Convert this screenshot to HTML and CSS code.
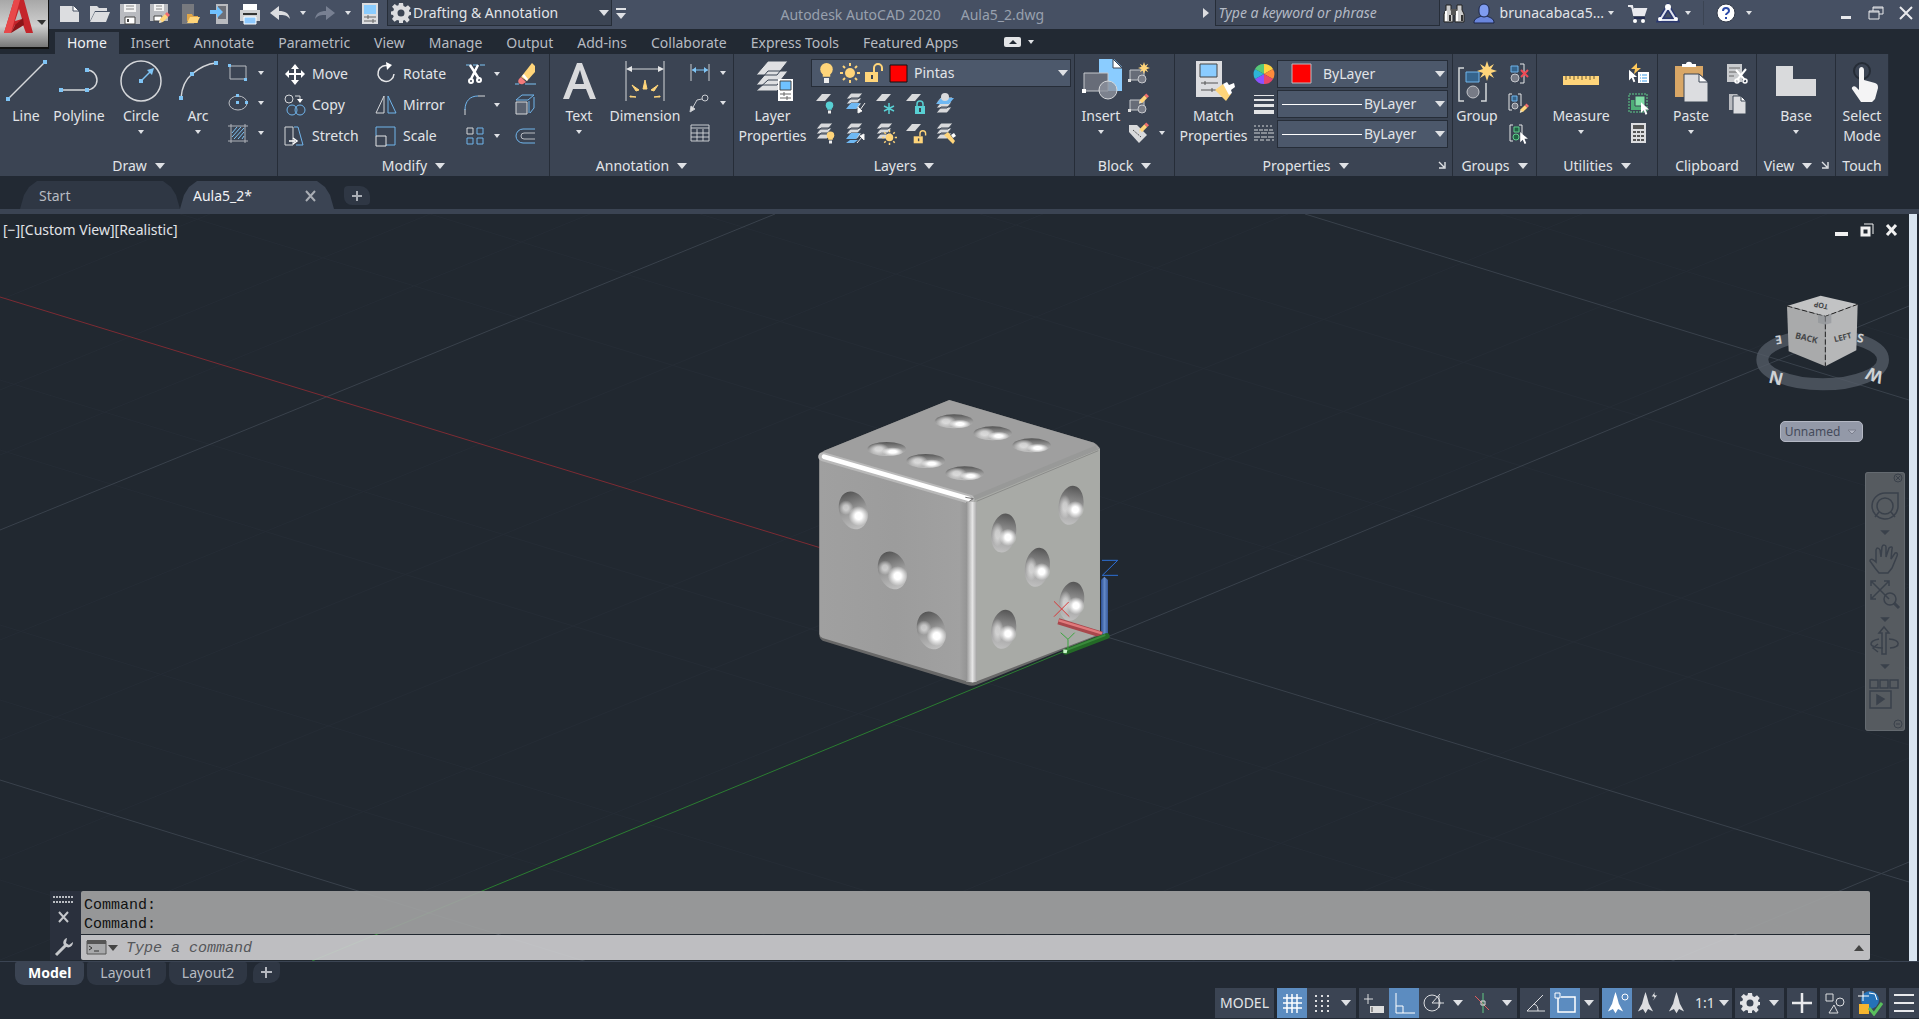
FILE: index.html
```html
<!DOCTYPE html>
<html lang="en">
<head>
<meta charset="utf-8">
<title>Autodesk AutoCAD 2020 - Aula5_2.dwg</title>
<link rel="stylesheet" href="styles.css">
</head>
<body>
<svg class="sprite" aria-hidden="true">
  <defs>
    <symbol id="stack" viewBox="0 0 24 24"><path d="M8 1h12l-5 6H3zM8 6h11l-5 6H3zM8 11h11l-5 6H3z" fill="#d9dadc" stroke="#3b4453"/></symbol>
    <symbol id="sheet" viewBox="0 0 24 24"><path d="M9 3h9l-6 7H3z" fill="#d9dadc"/></symbol>
    <symbol id="bulb" viewBox="0 0 12 16"><circle cx="6" cy="5" r="5"/><path d="M3 8h6v3H3z"/><path d="M4 12h4v4H4z" fill="#eee"/></symbol>
    <symbol id="sun" viewBox="0 0 20 20"><circle cx="10" cy="10" r="5"/><path d="M10 0v3M10 17v3M0 10h3M17 10h3M3 3l2 2M15 15l2 2M3 17l2-2M15 5l2-2" stroke="#ffd57a" stroke-width="2"/></symbol>
    <symbol id="unlock" viewBox="0 0 20 20"><path d="M1 9h13v10H1z"/><path d="M10 9V5a4 4 0 0 1 8 0v3" fill="none" stroke="#ffd57a" stroke-width="2"/><path d="M7 12h2v4H7z" fill="#3b4453"/></symbol>
    <symbol id="pencil" viewBox="0 0 12 12"><path d="M1 11l1-4 5-5 3 3-5 5z" fill="#ffd57a"/><path d="M7 2l2-2 3 3-2 2z" fill="#f26d6d"/><path d="M1 11l1-3 2 2z" fill="#ddd"/></symbol>
    <symbol id="cursor" viewBox="0 0 10 14"><path d="M0 0v12l3-3 2 5 2-1-2-5h4z" fill="#fff"/></symbol>
    <symbol id="star" viewBox="0 0 20 20"><path d="M10 0l2 6 5-3-3 5 6 2-6 2 3 5-5-3-2 6-2-6-5 3 3-5-6-2 6-2-3-5 5 3z" fill="#ffd57a"/></symbol>
    <symbol id="gear" viewBox="0 0 20 20"><path fill-rule="evenodd" d="M8 0h4l.5 3 2 1 2.500-1.700 2.700 2.700L18 7.500l.5 1.500H20v3l-2 .5-1 2 1.700 2.500-2.700 2.700L13.500 17l-1.500.8V20H8v-2.500L6 17l-2.500 1.700L1 16l1.700-2.500L2 12l-2-.5V8.500L2.300 8l.7-2L1 3.700 3.700 1 6 2.700l1.500-.5zM10 6.500a3.500 3.500 0 1 0 0 7 3.500 3.500 0 0 0 0-7z"/></symbol>
    <symbol id="annot" viewBox="0 0 20 26"><path d="M10 0c2 6 3 10 4 14l5 9-6-3-3 5-3-5-6 3 5-9C7 10 8 6 10 0z"/></symbol>
    <symbol id="block" viewBox="0 0 24 24"><path d="M3 9h14v10H3z" fill="#676c78" stroke="#c5c7cc"/><circle cx="15" cy="18" r="4" fill="#777b86" stroke="#c5c7cc"/><path d="M1 18h3v3H1z" fill="#ddd"/></symbol>
    <symbol id="launch" viewBox="0 0 8 8"><path d="M1 1l5 5M7 1v6H1" fill="none" stroke="#dfe1e5" stroke-width="1.400"/></symbol>
  </defs>
</svg>

<header class="titlebar">
  <button class="app-button" aria-label="Application menu">
    <svg width="49" height="49" viewBox="0 0 49 49">
      <path d="M4 34L14 1h10l9 33h-7l-3-8h-8l-4 8z" fill="#c4252b"/>
      <path d="M14 1h6L11 34H4z" fill="#e8484a"/><path d="M15 26l8-7 1 7-13 8z" fill="#8d1519"/><path d="M19 10l3 10-7 2z" fill="#b9b9b9"/>
      <path d="M37 21h9l-4 5z" fill="#333"/>
    </svg>
  </button>
  <nav class="quick" aria-label="Quick access">
    <button aria-label="New"><svg width="24" height="24" fill="#dcdde0"><path d="M2 5h13l6 6v10H2z"/><path d="M15 4v6h6z" fill="#fff" stroke="#465063"/></svg></button>
    <button aria-label="Open"><svg width="24" height="24" fill="#dcdde0"><path d="M2 20V5h7l2 2h8v3H7z"/><path d="M7 11h15l-4 10H2z"/></svg></button>
    <button aria-label="Save"><svg width="24" height="24"><path d="M2 3h20v20H2z" fill="#b9bbc0"/><path d="M6 3h12v8H6z" fill="#f3f3f3"/><path d="M8 5h8M8 8h8" stroke="#888"/><path d="M7 16h10v7H7z" fill="#fff" stroke="#444"/><path d="M9 18h2v3H9z" fill="#444"/></svg></button>
    <button aria-label="Save as"><svg width="24" height="24"><path d="M2 3h18v17H2z" fill="#b9bbc0"/><path d="M6 3h10v7H6z" fill="#f3f3f3"/><path d="M8 5h6M8 8h6" stroke="#888"/><path d="M6 15h8v5H6z" fill="#fff" stroke="#444"/><use href="#pencil" x="10" y="11" width="12" height="12"/></svg></button>
    <button aria-label="Open from mobile"><svg width="24" height="24"><path d="M4 3h12v20H4z" fill="#77797e"/><path d="M9 20v-7h5l1 2h5v7z" fill="#e0a648"/><path d="M12 16h10l-3 6H9z" fill="#ffd57a"/></svg></button>
    <button aria-label="Save to mobile"><svg width="24" height="24"><path d="M8 3h12v20H8z" fill="#b9bbc0"/><path d="M10 5h8v13h-8z" fill="#6d7078"/><path d="M2 9h7V5l6 6-6 6v-4H2z" fill="#6fc1ff"/></svg></button>
    <button aria-label="Plot"><svg width="24" height="24"><path d="M5 3h14v6H5z" fill="#fff"/><path d="M2 9h20v11H2z" fill="#cfd0d3"/><path d="M5 13h14" stroke="#333" stroke-width="2"/><path d="M6 16h12v7H6z" fill="#8fcaff" stroke="#fff"/></svg></button>
    <button aria-label="Undo"><svg width="24" height="24"><path d="M2 12l9-7v5c6 0 10 2 11 8-3-4-6-4-11-4v5z" fill="#dcdde0"/></svg></button>
    <button class="narrow" aria-label="Undo list"><i class="caret"></i></button>
    <button aria-label="Redo"><svg width="24" height="24"><path d="M22 12l-9-7v5C7 10 3 12 2 18c3-4 6-4 11-4v5z" fill="#788092"/></svg></button>
    <button class="narrow" aria-label="Redo list"><i class="caret"></i></button>
    <button aria-label="Properties"><svg width="24" height="24"><path d="M4 2h16v21H4z" fill="#dcdde0"/><path d="M6 4h12v9H6z" fill="#8accff"/><path d="M6 16h12M6 20h12M10 14v4M15 18v4" stroke="#666"/></svg></button>
  </nav>
  <div class="workspace field">
    <svg width="20" height="20" fill="#dcdde0"><use href="#gear"/></svg>
    <select aria-label="Workspace"><option>Drafting &amp; Annotation</option></select>
    <i class="caret big"></i>
  </div>
  <button class="customize" aria-label="Customize toolbar"><i class="caret big"></i></button>
  <div class="caption"><span>Autodesk AutoCAD 2020</span><span>Aula5_2.dwg</span></div>
  <div class="infocenter">
    <button class="expand" aria-label="Collapse search"><svg width="6" height="10"><path d="M0 0l6 5-6 5z" fill="#dcdde0"/></svg></button>
    <input class="search" type="text" placeholder="Type a keyword or phrase" aria-label="Search">
    <button aria-label="Search help"><svg width="24" height="24"><path d="M4 4h5v5l2 4v8H2v-8l2-4zM15 4h5v5l2 4v8h-9v-8l2-4z" fill="#ccc" stroke="#222"/><path d="M9 8h6v6H9z" fill="#555"/><path d="M4 10v10M15 10v10" stroke="#fff" stroke-width="2"/><path d="M8 14v6M20 14v6" stroke="#333" stroke-width="2"/></svg></button>
    <button class="user"><svg width="24" height="24"><path d="M2 22c0-5 4-5 7-7h6c3 2 7 2 7 7z" fill="#6a86dd" stroke="#1d2748"/><rect x="7" y="3" width="10" height="13" rx="5" fill="#7f9cf0" stroke="#1d2748"/></svg><span>brunacabaca5...</span><i class="caret"></i></button>
    <button class="cart" aria-label="App store"><svg width="24" height="24"><path d="M2 5h4l2 9h10l2-6H8" fill="#e8e9ee" stroke="#e8e9ee" stroke-width="2"/><path d="M8 17h11" stroke="#222c52" stroke-width="2"/><circle cx="9" cy="20" r="2" fill="#fff"/><circle cx="17" cy="20" r="2" fill="#fff"/></svg></button>
    <button class="stay" aria-label="Stay connected"><svg width="24" height="24"><path d="M12 6L4 19h16z" fill="none" stroke="#2b3870" stroke-width="5"/><path d="M12 6L4 19h16z" fill="none" stroke="#dfe3ee" stroke-width="2"/><g fill="#fff"><circle cx="12" cy="6" r="3"/><circle cx="4" cy="18" r="2"/><circle cx="20" cy="18" r="2"/></g></svg><i class="caret"></i></button>
    <button class="help" aria-label="Help"><svg width="22" height="22"><circle cx="11" cy="11" r="9" fill="#fff" stroke="#333a49"/><path d="M8 9c0-4 6-4 6 0 0 2-3 2-3 4M11 15v2" fill="none" stroke="#2c4aa8" stroke-width="2"/></svg><i class="caret"></i></button>
  </div>
  <div class="window-buttons">
    <button aria-label="Minimize"><svg width="16" height="16"><path d="M3 11h10v3H3z" fill="#e8e9ec"/></svg></button>
    <button aria-label="Restore"><svg width="16" height="16" fill="none" stroke="#e8e9ec"><path d="M1 6h10v8H1zM5 6V2h10v7h-4M1 7h10M5 3h10"/></svg></button>
    <button aria-label="Close"><svg width="16" height="16"><path d="M2 2l12 12M14 2L2 14" stroke="#e8e9ec" stroke-width="2"/></svg></button>
  </div>
</header>

<nav class="ribbon-tabs" aria-label="Ribbon tabs">
  <button class="active">Home</button><button>Insert</button><button>Annotate</button><button>Parametric</button><button>View</button><button>Manage</button><button>Output</button><button>Add-ins</button><button>Collaborate</button><button>Express Tools</button><button>Featured Apps</button>
  <button class="minimize" aria-label="Minimize ribbon"><svg width="17" height="11"><rect width="17" height="10" rx="2" fill="#e3e4e7"/><path d="M5 7l4-4 4 4z" fill="#222933"/></svg><i class="caret"></i></button>
</nav>

<main class="ribbon">
  <section class="panel draw">
    <div class="body">
      <button class="tool line"><svg width="44" height="44"><path d="M4 40L41 3" stroke="#d5d7da" stroke-width="1.500"/><path d="M2 38h4v4H2zM39 1h4v4h-4z" fill="#7fc4f5"/></svg>Line</button>
      <button class="tool poly"><svg width="44" height="44"><path d="M4 31h26a10 10 0 0 0 0-20" fill="none" stroke="#d5d7da" stroke-width="1.500"/><path d="M2 29h4v4H2zM28 29h4v4h-4zM28 9h4v4h-4z" fill="#7fc4f5"/></svg>Polyline</button>
      <button class="tool circle"><svg width="44" height="44"><circle cx="22" cy="22" r="20" fill="none" stroke="#d5d7da" stroke-width="1.500"/><path d="M22 22l10-10" stroke="#7fc4f5" stroke-width="1.500"/><path d="M35 9l-2 7-5-5zM20 20h4v4h-4z" fill="#7fc4f5"/></svg>Circle<i class="caret"></i></button>
      <button class="tool arc"><svg width="44" height="44"><path d="M5 39C6 26 10 20 16 15S29 5 40 4" fill="none" stroke="#d5d7da" stroke-width="1.500"/><path d="M3 37h4v4H3zM14 13h4v4h-4zM38 2h4v4h-4z" fill="#7fc4f5"/></svg>Arc<i class="caret"></i></button>
      <div class="stack">
        <button aria-label="Rectangle"><svg width="24" height="24"><path d="M4 5h16v13H4z" fill="none" stroke="#b9bcc2"/><path d="M2 3h3v3H2zM18 17h3v3h-3z" fill="#7fc4f5"/></svg><i class="caret"></i></button>
        <button aria-label="Ellipse"><svg width="24" height="24"><ellipse cx="12" cy="12" rx="9" ry="7" fill="none" stroke="#b9bcc2"/><path d="M10 10h3v3h-3zM10 3h3v3h-3zM19 10h3v3h-3z" fill="#7fc4f5"/></svg><i class="caret"></i></button>
        <button aria-label="Hatch"><svg width="24" height="24"><path d="M5 3v19M19 3v19M2 5h20M2 20h20" stroke="#aeb1b8"/><path d="M6 12l5-6M6 16l9-10M8 18L18 7M12 18l6-7M16 18l2-3" stroke="#7fc4f5"/></svg><i class="caret"></i></button>
      </div>
    </div>
    <h2>Draw<i class="caret big"></i></h2>
  </section>

  <section class="panel modify">
    <div class="body">
      <button><svg width="24" height="24"><path d="M12 2l4 5h-3v4h5V8l4 4-4 4v-3h-5v5h3l-4 5-4-5h3v-5H6v3l-4-4 4-4v3h5V7H8z" fill="#fff"/></svg>Move</button>
      <button><svg width="24" height="24"><path d="M15 4a8 8 0 1 0 5 8" fill="none" stroke="#e5e6e8" stroke-width="1.500"/><path d="M12 0l6 3-5 5z" fill="#fff"/></svg>Rotate</button>
      <button aria-label="Trim"><svg width="24" height="24"><path d="M3 3h20" stroke="#7fc4f5" stroke-dasharray="5 2"/><path d="M7 3l9 14M15 3L8 17" stroke="#fff" stroke-width="2.500"/><g fill="none" stroke="#fff" stroke-width="2"><circle cx="8" cy="19" r="2"/><circle cx="16" cy="18" r="2"/></g></svg><i class="caret"></i></button>
      <button aria-label="Erase"><svg width="24" height="24"><path d="M8 15L19 1l3 3v6l-8 9z" fill="#ffd57a"/><path d="M8 15l5 5-3 2c-4 1-6-2-4-5z" fill="#f57b7b"/><path d="M9 14l5 5 1-2-4-5z" fill="#fff"/><path d="M2 22h4M12 22h11" stroke="#7fc4f5"/></svg></button>
      <button><svg width="24" height="24" fill="none"><circle cx="6" cy="6" r="4" stroke="#d5d7da"/><path d="M12 3h5v5" stroke="#d5d7da"/><path d="M14 6h6l-3 4z" fill="#fff"/><circle cx="9" cy="17" r="5" stroke="#70b5ec"/><circle cx="17" cy="17" r="5" stroke="#70b5ec"/></svg>Copy</button>
      <button><svg width="24" height="24" fill="none"><path d="M10 3v17H2z" stroke="#d5d7da"/><path d="M14 3v17h8z" stroke="#70b5ec"/></svg>Mirror</button>
      <button aria-label="Fillet"><svg width="24" height="24" fill="none"><path d="M2 22v-6" stroke="#d5d7da"/><path d="M2 17C2 8 7 3 15 3" stroke="#70b5ec"/><path d="M15 3h7" stroke="#d5d7da"/></svg><i class="caret"></i></button>
      <button aria-label="Explode"><svg width="24" height="24" fill="none" stroke="#70b5ec"><path d="M3 9h11v12H3z" stroke="#d5d7da" fill="#5a6270"/><path d="M3 7l6-5h12l-6 5zM17 20l4-5V4M16 8v12"/></svg></button>
      <button><svg width="24" height="24" fill="none"><path d="M2 3h8v18H2z" stroke="#d5d7da"/><path d="M11 3h4l5 18h-7" stroke="#70b5ec"/><path d="M6 17h6M10 14l4 3-4 3" stroke="#fff" stroke-width="1.500"/></svg>Stretch</button>
      <button><svg width="24" height="24" fill="none"><path d="M2 12V3h19v18h-9" stroke="#70b5ec"/><path d="M2 12h10v10H2z" stroke="#e5e6e8"/></svg>Scale</button>
      <button aria-label="Array"><svg width="24" height="24" fill="none" stroke="#70b5ec"><path d="M4 4h6v6H4z" stroke="#d5d7da"/><path d="M14 4h6v6h-6zM4 14h6v6H4zM14 14h6v6h-6z"/></svg><i class="caret"></i></button>
      <button aria-label="Offset"><svg width="24" height="24" fill="none"><path d="M22 5H10a7 7 0 0 0 0 14h12" stroke="#70b5ec"/><path d="M22 9H11a3 3 0 0 0 0 6h11" stroke="#b9bcc2"/></svg></button>
    </div>
    <h2>Modify<i class="caret big"></i></h2>
  </section>

  <section class="panel annotation">
    <div class="body">
      <button class="tool text"><svg width="44" height="44"><path d="M6 40L20 4h5l14 36h-6l-4-10H16l-4 10zM18 25h9L23 11z" fill="#d9dadc" fill-rule="evenodd"/></svg>Text<i class="caret"></i></button>
      <button class="tool dim"><svg width="44" height="44"><path d="M3 2v40M41 2v40M5 10h34" stroke="#d5d7da"/><path d="M3 10l6-3v6zM41 10l-6-3v6z" fill="#e5e6e8"/><path d="M20 30l2-9 2 9zM13 32l-4-6 7 5zM31 32l4-6-7 5zM13 38l-6-1v1zM31 38l6-1v1z" fill="#ffd57a" stroke="#ffd57a"/></svg>Dimension</button>
      <div class="stack">
        <button aria-label="Linear"><svg width="24" height="24"><path d="M3 3v17M21 3v17" stroke="#c9ccd1"/><path d="M4 9h16" stroke="#7fc4f5"/><path d="M4 9l4-3v6zM20 9l-4-3v6z" fill="#7fc4f5"/></svg><i class="caret"></i></button>
        <button aria-label="Leader"><svg width="24" height="24" fill="none" stroke="#c9ccd1"><circle cx="17" cy="7" r="3"/><path d="M14 8L9 9 4 18"/><path d="M2 21l1-6 4 3z" fill="#ddd"/></svg><i class="caret"></i></button>
        <button aria-label="Table"><svg width="24" height="24" fill="none" stroke="#c9ccd1"><path d="M3 4h18v16H3zM3 7h18M3 12h18M3 16h18M9 8v12M15 8v12"/></svg></button>
      </div>
    </div>
    <h2>Annotation<i class="caret big"></i></h2>
  </section>

  <section class="panel layers">
    <div class="body">
      <button class="tool layerprops"><svg width="44" height="44"><path d="M17 2h20L26 16H5zM17 12h20L26 26H5zM17 21h20L26 32H5z" fill="#dfe0e2" stroke="#3b4453"/><path d="M27 20h15v22H27z" fill="#fff"/><path d="M29 22h11v9H29z" fill="#6fc1ff" stroke="#444"/><path d="M29 35h11M29 39h11M33 33v4M36 37v4" stroke="#666"/></svg>Layer<br>Properties</button>
      <div class="layer-side">
        <div class="field layer-select">
          <svg width="96" height="24" fill="#ffd57a"><use href="#bulb" x="7" y="2" width="15" height="20"/><use href="#sun" x="28" y="2" width="20" height="20"/><use href="#unlock" x="52" y="2" width="20" height="20"/><path d="M78 4h17v17H78z" fill="#f00" stroke="#111"/></svg>
          <select aria-label="Current layer"><option>Pintas</option></select><i class="caret big"></i>
        </div>
        <div class="icon-row">
          <button aria-label="Layer off"><svg width="24" height="24"><use href="#sheet"/><g fill="#58d0d4"><use href="#bulb" x="12" y="10" width="9" height="13"/></g></svg></button>
          <button aria-label="Make current"><svg width="24" height="24"><use href="#stack" y="1"/><path d="M3 18l5-6h9l-4 6z" fill="#6fb8f2"/><path d="M22 12l-5 7M15 22v-6l4 4z" fill="#fff" stroke="#eee"/></svg></button>
          <button aria-label="Freeze"><svg width="24" height="24"><use href="#sheet"/><path d="M16 12v11M11 15l10 5M21 15l-10 5" stroke="#58d0d4" stroke-width="1.500"/></svg></button>
          <button aria-label="Lock"><svg width="24" height="24"><use href="#sheet"/><path d="M12 15h10v8H12z" fill="#58d0d4"/><path d="M14 15v-2a3 3 0 0 1 6 0v2" fill="none" stroke="#58d0d4" stroke-width="1.500"/><path d="M16 17h2v4h-2z" fill="#3b4453"/></svg></button>
          <button aria-label="Match layer"><svg width="24" height="24"><use href="#stack" y="5"/><path d="M3 13l5-6h13l-5 6z" fill="#6fb8f2"/><circle cx="12" cy="6" r="4" fill="#d9dadc"/></svg></button>
        </div>
        <div class="icon-row">
          <button aria-label="Turn all on"><svg width="24" height="24"><use href="#stack" y="1"/><g fill="#ffd57a"><use href="#bulb" x="13" y="10" width="9" height="13"/></g></svg></button>
          <button aria-label="Layer walk"><svg width="24" height="24"><use href="#stack" y="1"/><path d="M3 18l5-6h9l-4 6zM3 22l4-3h8l-4 3z" fill="#6fb8f2"/><path d="M14 22l5-6M21 13v6l-4-4z" fill="#fff" stroke="#eee"/></svg></button>
          <button aria-label="Thaw all"><svg width="24" height="24" fill="#ffd57a"><use href="#stack" y="1"/><use href="#sun" x="9" y="9" width="15" height="15"/></svg></button>
          <button aria-label="Unlock"><svg width="24" height="24" fill="#ffd57a"><use href="#sheet"/><use href="#unlock" x="10" y="9" width="14" height="14"/></svg></button>
          <button aria-label="Change to current"><svg width="24" height="24"><use href="#stack" y="1"/><path d="M11 14l4-3 7 9-2 3-3-3z" fill="#ffd57a"/><path d="M18 14l3-2 2 3-3 2z" fill="#fff"/></svg></button>
        </div>
      </div>
    </div>
    <h2>Layers<i class="caret big"></i></h2>
  </section>

  <section class="panel block-panel">
    <div class="body">
      <button class="tool insert"><svg width="44" height="44"><path d="M20 0h15l8 8v24H20z" fill="#8accff"/><path d="M34 0v9h9z" fill="#fff" stroke="#3b4453"/><path d="M5 14h24v18H5z" fill="#676c78" stroke="#c5c7cc"/><circle cx="29" cy="31" r="9" fill="#8d929e" fill-opacity=".8" stroke="#d5d7da"/><path d="M3 30h4v4H3z" fill="#fff"/></svg>Insert<i class="caret"></i></button>
      <div class="stack">
        <button aria-label="Create"><svg width="24" height="24"><use href="#block"/><use href="#star" x="11" y="1" width="12" height="12"/></svg></button>
        <button aria-label="Edit"><svg width="24" height="24"><use href="#block"/><use href="#pencil" x="11" y="2" width="11" height="12"/></svg></button>
        <button aria-label="Edit attributes"><svg width="24" height="24"><path d="M2 4h8l10 10-8 8L2 11z" fill="#d9dadc"/><path d="M6 9l8 7" stroke="#555" stroke-dasharray="2 1"/><use href="#pencil" x="11" y="1" width="11" height="12"/></svg><i class="caret"></i></button>
      </div>
    </div>
    <h2>Block<i class="caret big"></i></h2>
  </section>

  <section class="panel properties">
    <div class="body">
      <button class="tool match"><svg width="44" height="44"><path d="M4 2h26v36H4z" fill="#dcdde0"/><path d="M8 5h17v13H8z" fill="#8accff" stroke="#444"/><path d="M9 24h17M9 31h17M13 22v4M20 29v4" stroke="#555"/><path d="M23 31l8-6 8 10-5 7z" fill="#ffd57a"/><path d="M31 25l4-2 2 3 5-2 1 4-4 3 1 3-3 2z" fill="#fff"/></svg>Match<br>Properties</button>
      <div class="prop-list">
        <svg width="24" height="24"><path d="M12 12V2a10 10 0 0 1 9 5z" fill="#ffd23f"/><path d="M12 12l9-5a10 10 0 0 1 0 10z" fill="#ff8a3c"/><path d="M12 12l9 5a10 10 0 0 1-9 5z" fill="#e8466b"/><path d="M12 12v10a10 10 0 0 1-9-5z" fill="#8c52ff"/><path d="M12 12l-9 5a10 10 0 0 1 0-10z" fill="#2db4d8"/><path d="M12 12L3 7a10 10 0 0 1 9-5z" fill="#57c878"/></svg>
        <div class="field color"><svg width="22" height="22"><path d="M1 1h19v19H1z" fill="#f00" stroke="#b9bcc2"/></svg><select aria-label="Object color"><option>ByLayer</option></select><i class="caret big"></i></div>
        <svg width="24" height="24" fill="#e3e4e6"><path d="M2 3h20v1H2zM2 7h20v2H2zM2 12h20v3H2zM2 18h20v4H2z"/></svg>
        <div class="field ltype"><hr><select aria-label="Lineweight"><option>ByLayer</option></select><i class="caret big"></i></div>
        <svg width="24" height="24" stroke="#d5d7da"><path d="M2 4h20" stroke-dasharray="2 2"/><path d="M2 8h20" stroke-dasharray="4 1"/><path d="M2 11h20M2 15h20" stroke-dasharray="6 1"/><path d="M2 18h20" stroke-dasharray="4 2"/></svg>
        <div class="field ltype"><hr><select aria-label="Linetype"><option>ByLayer</option></select><i class="caret big"></i></div>
      </div>
    </div>
    <h2 class="has-launcher">Properties<i class="caret big"></i><svg class="launcher" width="8" height="8"><use href="#launch"/></svg></h2>
  </section>

  <section class="panel groups">
    <div class="body">
      <button class="tool group"><svg width="44" height="44"><path d="M9 9H4v33h5M26 42h5V24" fill="none" stroke="#d5d7da" stroke-width="1.500"/><path d="M11 13h13v10H11z" fill="#35648c" stroke="#70b5ec"/><circle cx="18" cy="33" r="6" fill="#777b86" stroke="#c5c7cc"/><use href="#star" x="22" y="2" width="20" height="20"/></svg>Group</button>
      <div class="stack">
        <button aria-label="Ungroup"><svg width="24" height="24"><path d="M4 5h7v6H4z" fill="#35648c" stroke="#70b5ec"/><circle cx="8" cy="17" r="4" fill="#777b86" stroke="#c5c7cc"/><path d="M13 3h4v19h-4" fill="none" stroke="#e5e6e8"/><path d="M14 9l7 7M21 9l-7 7" stroke="#ef4a55" stroke-width="2"/></svg></button>
        <button aria-label="Group edit"><svg width="24" height="24"><path d="M5 3H2v16h3M11 3h3v12" fill="none" stroke="#e5e6e8"/><path d="M5 5h5v5H5z" fill="#35648c" stroke="#70b5ec"/><circle cx="8" cy="15" r="3" fill="#777b86" stroke="#c5c7cc"/><use href="#pencil" x="12" y="12" width="10" height="11"/></svg></button>
        <button aria-label="Group selection"><svg width="24" height="24"><path d="M6 4H3v16h3M12 4h3v9" fill="none" stroke="#e5e6e8"/><path d="M7 6h5v5H7z" fill="#216344" stroke="#5fd08b"/><circle cx="9" cy="16" r="3" fill="#216344" stroke="#5fd08b"/><use href="#cursor" x="13" y="11" width="9" height="12"/></svg></button>
      </div>
    </div>
    <h2>Groups<i class="caret big"></i></h2>
  </section>

  <section class="panel utilities">
    <div class="body">
      <button class="tool measure"><svg width="44" height="44"><path d="M4 17h36v9H4z" fill="#ffd57a"/><path d="M7 17v4M11 17v3M15 17v4M19 17v3M23 17v4M27 17v3M31 17v4M35 17v3" stroke="#6b5a34"/></svg>Measure<i class="caret"></i></button>
      <div class="stack">
        <button aria-label="Quick select"><svg width="24" height="24"><path d="M11 2L5 8h4l-1 5 7-6h-4z" fill="#ffc85a"/><use href="#cursor" x="3" y="8" width="9" height="14"/><path d="M12 11h11v11H12z" fill="#fff"/><path d="M14 14h1M14 17h1M14 20h1M16 14h5M16 17h5M16 20h5" stroke="#3a9be8"/></svg></button>
        <button aria-label="Select all"><svg width="24" height="24"><path d="M3 3h18v18H3z" fill="none" stroke="#5fd08b" stroke-dasharray="2 1"/><path d="M5 9h11v10H5z" fill="#4fae78"/><path d="M9 5h10v10H9z" fill="#7fdca5" stroke="#3b4453"/><use href="#cursor" x="15" y="11" width="9" height="13"/></svg></button>
        <button aria-label="Calculator"><svg width="24" height="24"><path d="M5 2h15v20H5z" fill="#dcdde0"/><path d="M7 4h11v4H7zM7 10h3v2H7zM11 10h3v2h-3zM15 10h3v2h-3zM7 14h3v2H7zM11 14h3v2h-3zM15 14h3v2h-3zM7 18h3v2H7zM11 18h3v2h-3zM15 18h3v2h-3z" fill="#555"/></svg></button>
      </div>
    </div>
    <h2>Utilities<i class="caret big"></i></h2>
  </section>

  <section class="panel clipboard">
    <div class="body">
      <button class="tool paste"><svg width="44" height="44"><path d="M6 7h28v31H6z" fill="#d9a766"/><path d="M13 8V5h4c0-3 6-3 6 0h4v3z" fill="#fff"/><path d="M15 15h15l9 8v20H15z" fill="#dcdde0" stroke="#3b4453"/><path d="M30 15v8h9z" fill="#fff" stroke="#3b4453"/></svg>Paste<i class="caret"></i></button>
      <div class="stack">
        <button aria-label="Cut"><svg width="24" height="24"><path d="M2 3h15v18H2z" fill="#c9cbce"/><path d="M4 7h11M4 11h8M4 15h5" stroke="#666"/><path d="M11 9l9 10M21 8l-9 11" stroke="#fff" stroke-width="2"/><g fill="none" stroke="#fff" stroke-width="1.500"><circle cx="12" cy="20" r="2"/><circle cx="20" cy="20" r="2"/></g></svg></button>
        <button aria-label="Copy clip"><svg width="24" height="24"><path d="M4 3h8l2 2v14H4z" fill="#b9bbc0"/><path d="M8 5h8l5 5v13H8z" fill="#dcdde0" stroke="#3b4453"/><path d="M16 5v5h5z" fill="#fff" stroke="#3b4453"/></svg></button>
      </div>
    </div>
    <h2>Clipboard</h2>
  </section>

  <section class="panel view">
    <div class="body"><button class="tool base"><svg width="44" height="44"><path d="M2 7h17v13h23v17H2z" fill="#d9dadc"/></svg>Base<i class="caret"></i></button></div>
    <h2 class="has-launcher">View<i class="caret big"></i><svg class="launcher" width="8" height="8"><use href="#launch"/></svg></h2>
  </section>

  <section class="panel touch">
    <div class="body"><button class="tool mode"><svg width="44" height="44"><circle cx="22" cy="12" r="8" fill="none" stroke="#252c36" stroke-width="2"/><path d="M19 11c0-4 5-4 5 0v10l11 3c3 1 3 3 3 5l-3 11-3 3H21L12 30c-1-2 2-4 4-2l3 3z" fill="#f4f4f5"/></svg>Select<br>Mode</button></div>
    <h2>Touch</h2>
  </section>
</main>

<nav class="file-tabs" aria-label="Drawings">
  <button class="file-tab">Start</button>
  <button class="file-tab active">Aula5_2*<svg width="14" height="14"><path d="M2 2l9 10M11 2L2 12" stroke="#a9adb4" stroke-width="2"/></svg></button>
  <button class="new-tab" aria-label="New drawing"><svg width="12" height="12"><path d="M6 1v10M1 6h10" stroke="#a9adb4" stroke-width="2"/></svg></button>
</nav>

<section class="workarea">
  <div class="viewport">
    <svg class="scene" viewBox="0 214 1909 747" preserveAspectRatio="xMidYMid slice">
      <defs>
        <linearGradient id="shade" x1="0" y1="0" x2="0" y2="1"><stop offset="0" stop-color="#555"/><stop offset=".5" stop-color="#999"/><stop offset="1" stop-color="#c0c0c0"/></linearGradient>
        <radialGradient id="glow"><stop offset="0" stop-color="#fff"/><stop offset=".35" stop-color="#fff"/><stop offset="1" stop-color="#fff" stop-opacity="0"/></radialGradient>
        <linearGradient id="front" x1="0" y1="0" x2="1" y2="0"><stop offset="0" stop-color="#a0a0a0"/><stop offset=".5" stop-color="#9c9c9c"/><stop offset=".92" stop-color="#a1a1a1"/><stop offset="1" stop-color="#8c8c8c"/></linearGradient>
        <linearGradient id="edge" x1="0" y1="0" x2="1" y2="0"><stop offset="0" stop-color="#8e8e8e"/><stop offset=".6" stop-color="#e6e6e6"/><stop offset="1" stop-color="#a5a5a5"/></linearGradient>
        <linearGradient id="zbar" x1="0" y1="0" x2="1" y2="0"><stop offset="0" stop-color="#2c4f94"/><stop offset=".5" stop-color="#6288c6"/><stop offset="1" stop-color="#36599c"/></linearGradient>
        <g id="pipTop"><ellipse rx="58" ry="21" fill="url(#shade)"/><ellipse cx="-24" cy="0" rx="30" ry="18" fill="url(#glow)" opacity=".6"/><ellipse cx="18" cy="8" rx="32" ry="13" fill="url(#glow)"/></g>
        <g id="pipLeft"><ellipse rx="42" ry="58" transform="rotate(-18)" fill="url(#shade)"/><circle cx="-22" cy="-8" r="22" fill="url(#glow)" opacity=".55"/><circle cx="16" cy="17" r="30" fill="url(#glow)"/></g>
        <g id="pipRight"><ellipse rx="37" ry="59" transform="rotate(10)" fill="url(#shade)"/><ellipse cx="-18" cy="4" rx="18" ry="36" fill="url(#glow)" opacity=".5"/><circle cx="13" cy="13" r="26" fill="url(#glow)"/></g>
      </defs>
      <g class="minor">
        <path d="M0 380L1909 966M0 450L1680 966M0 625L1110 966M0 700L866 966M0 880L280 966M180 214L1909 745M430 214L1909 668M700 214L1909 585M980 214L1909 499M1500 214L1909 340"/>
        <path d="M0 300L210 214M0 390L430 214M0 455L590 214M0 640L1043 214M0 740L1288 214M0 860L1582 214M0 960L1827 214M240 966L1909 285M780 966L1909 505M980 966L1909 587M1180 966L1909 668M1400 966L1909 758"/>
      </g>
      <path class="major" d="M1107 637L1909 306M1107 637L1909 882M1305 214L1909 400M0 530L775 214M0 780L600 966M1660 966L1909 862"/>
      <path d="M0 297L821 548" stroke="#7d2b33"/>
      <path d="M312 961L1070 649" stroke="#2b7d31"/>
      <g transform="translate(780 380) scale(.33333)">
        <path d="M508 60L942 188Q960 196 960 215V765L590 914Q575 920 560 914L128 782Q118 776 118 765V228Q118 217 132 212z" fill="#686868"/>
        <path d="M508 60L942 188L960 205L575 362L118 228L132 212z" fill="#9f9f9f"/>
        <path d="M118 230L575 362V908L130 775Q118 770 118 760z" fill="url(#front)"/>
        <path d="M575 362L960 205V762L575 910z" fill="#a8aaa6"/>
        <path d="M580 355L950 203" stroke="#989998" stroke-width="14"/><path d="M590 364L955 212" stroke="#8c8d8b" stroke-width="3"/>
        <path d="M128 230L570 358" stroke="#b9b9b9" stroke-width="27" stroke-linecap="round"/>
        <path d="M132 230L566 356" stroke="#fff" stroke-width="14" stroke-linecap="round"/>
        <path d="M558 366h32v540h-32z" fill="url(#edge)"/>
        <path d="M556 352l24 4-12 8" fill="none" stroke="#777" stroke-width="3"/>
        <use href="#pipTop" x="522" y="124"/><use href="#pipTop" x="638" y="160"/><use href="#pipTop" x="755" y="196"/><use href="#pipTop" x="320" y="207"/><use href="#pipTop" x="437" y="243"/><use href="#pipTop" x="554" y="280"/>
        <use href="#pipLeft" x="220" y="391"/><use href="#pipLeft" x="337" y="571"/><use href="#pipLeft" x="454" y="751"/>
        <use href="#pipRight" x="671" y="459"/><use href="#pipRight" x="873" y="376"/><use href="#pipRight" x="772" y="562"/><use href="#pipRight" x="671" y="748"/><use href="#pipRight" x="875" y="664"/>
        <path d="M963 600l10-10 11 10v168h-21z" fill="url(#zbar)"/>
        <path d="M835 724L966 764" stroke="#a8474c" stroke-width="19"/><path d="M836 721L966 760" stroke="#e07a7c" stroke-width="7"/>
        <path d="M857 815L980 768" stroke="#236a26" stroke-width="18" stroke-linecap="round"/><path d="M857 811L976 765" stroke="#3a8a3c" stroke-width="6"/><path d="M850 808l12 2-2 10-10-1z" fill="#c8f5c8"/>
        <path d="M966 541h47l-46 45h47" fill="none" stroke="#2d6fd8" stroke-width="3"/>
        <path d="M822 664l46 46M866 666l-44 44" stroke="#d93636" stroke-width="3"/>
        <path d="M842 758l22 20 20-20M864 778v30" fill="none" stroke="#3ba53e" stroke-width="3"/>
      </g>
    </svg>
    <div class="view-label">[−][Custom View][Realistic]</div>
    <div class="view-buttons">
      <button aria-label="Minimize view"><svg width="14" height="14"><path d="M0 9h13v4H0z" fill="#f1f1f1"/></svg></button>
      <button aria-label="Restore view"><svg width="14" height="14" fill="none" stroke="#f1f1f1"><path d="M2 5h7v7H2z" stroke-width="3"/><path d="M4 1h9v10"/></svg></button>
      <button aria-label="Close view"><svg width="14" height="14"><path d="M2 2l9 10M11 2L2 12" stroke="#f1f1f1" stroke-width="3"/></svg></button>
    </div>
    <div class="navigator">
      <svg width="140" height="100" viewBox="100 100 420 300">
        <ellipse cx="306" cy="300" rx="181" ry="74" fill="none" stroke="#555d68" stroke-width="36" opacity=".75"/>
        <g class="compass"><text x="145" y="374" font-size="52" transform="rotate(14 168 355)">N</text><text x="156" y="252" font-size="36" transform="rotate(170 170 240)">E</text><text x="410" y="248" font-size="36" transform="rotate(10 420 235)">S</text><text x="434" y="368" font-size="52" transform="rotate(200 460 348)">W</text></g>
        <path d="M300 108L411 134L314 170L199 139z" fill="#c2c3c4"/><path d="M199 139L314 170V320L204 275z" fill="#a9aaab"/><path d="M314 170L411 134L407 272L314 320z" fill="#b6b7b8"/>
        <path d="M199 139L314 170L411 134M314 170V320" fill="none" stroke="#222" stroke-width="3" stroke-dasharray="16 7"/>
        <path d="M292 163l22 7 18-6v26l-18 5-22-6z" fill="#8d9196" opacity=".6"/>
        <g class="faces"><text x="222" y="236" font-size="26" transform="rotate(13 222 236)">BACK</text><text x="342" y="248" font-size="24" transform="rotate(-14 342 248)">LEFT</text><text x="283" y="142" font-size="22" transform="rotate(192 303 136)">TOP</text></g>
      </svg>
      <button class="ucs">Unnamed<svg width="10" height="6"><path d="M1 1h8L5 5z" fill="#b3b7c4" stroke="#7b7f8d"/></svg></button>
    </div>
    <div class="navbar">
      <svg width="40" height="259" viewBox="0 0 40 259" fill="none" stroke="#3a414b" stroke-width="1.500">
        <g stroke-width="1"><circle cx="33" cy="6" r="4"/><path d="M31 4l4 4M35 4l-4 4"/><circle cx="33" cy="252" r="4"/><path d="M31 252h4"/></g>
        <path d="M20 21h13v14a13 13 0 1 1-13-14z"/><circle cx="20" cy="34" r="8"/><path d="M14 40l-4 5M26 40l4 5"/>
        <path d="M17 59h6l-3 3zM17 146h6l-3 3zM17 193h6l-3 3z" fill="#3a414b"/>
        <path d="M10 96l-5-7c0-3 3-2 6 1V78c1-3 3-2 4 0l1 7 1-10c1-3 4-2 4 0v10l3-9c2-2 4-1 3 1l-1 10 4-6c2-1 3 1 2 3l-5 12-4 5H14z"/>
        <path d="M6 109l18 18M24 109L6 127M6 114v-5h5M19 109h5v5M6 122v5h5"/><circle cx="25" cy="127" r="6"/><path d="M29 131l5 5" stroke-width="3"/>
        <path d="M17 182v-21h-3l5-6 5 6h-3v21z"/><path d="M24 167c12 1 12 8 1 9M14 167c-5 1-8 3-8 5s5 4 12 4M13 172l-5 4 5 4"/>
        <path d="M5 208h8v8H5zM15 208h8v8h-8zM25 208h8v8h-8zM5 219h21v17H5z"/><path d="M12 223v9l7-5z" fill="#3a414b"/>
      </svg>
    </div>
    <div class="command">
      <div class="command-tools">
        <svg width="21" height="8" fill="#b9bcc2"><path d="M0 0h2v2H0zM3 0h2v2H3zM6 0h2v2H6zM9 0h2v2H9zM12 0h2v2h-2zM15 0h2v2h-2zM18 0h2v2h-2zM0 5h2v2H0zM3 5h2v2H3zM6 5h2v2H6zM9 5h2v2H9zM12 5h2v2h-2zM15 5h2v2h-2zM18 5h2v2h-2z"/></svg>
        <button aria-label="Close command line"><svg width="14" height="14"><path d="M2 2l9 10M11 2L2 12" stroke="#c5c7cb" stroke-width="2"/></svg></button>
        <button aria-label="Customize command line"><svg width="20" height="20"><path d="M2 18L12 8" stroke="#c5c7cb" stroke-width="3"/><path d="M13 1c-4 1-5 6-2 8 3 3 8 1 8-4l-4 3-3-2z" fill="#c5c7cb"/></svg></button>
      </div>
      <div class="command-box">
        <div class="history"><p>Command:</p><p>Command:</p></div>
        <div class="prompt">
          <svg width="32" height="18"><path d="M1 2h19v13H1z" fill="#a8a9ab" stroke="#555"/><path d="M1 1h19v4H1z" fill="#555"/><path d="M3 7l3 2-3 2M8 12h5" fill="none" stroke="#333"/><path d="M22 6h10l-5 6z" fill="#444"/></svg>
          <input type="text" placeholder="Type a command" aria-label="Command">
          <button aria-label="Command history"><svg width="10" height="6"><path d="M0 6l5-6 5 6z" fill="#444"/></svg></button>
        </div>
      </div>
    </div>
  </div>
</section>

<footer class="bottom">
  <nav class="layouts" aria-label="Layouts">
    <button class="active">Model</button><button>Layout1</button><button>Layout2</button><button class="add" aria-label="New layout"><svg width="11" height="11"><path d="M5 0v11M0 5h11" stroke="#b5b8bf" stroke-width="2"/></svg></button>
  </nav>
  <div class="status">
    <button class="model">MODEL</button>
    <div class="set">
      <button class="on" aria-label="Grid"><svg width="24" height="24" stroke="#fff" stroke-width="1.500"><path d="M7 3v19M12 3v19M17 3v19M3 7h19M3 12h19M3 17h19"/></svg></button>
      <button aria-label="Snap"><svg width="24" height="24" stroke="#dcdde0" stroke-width="2"><path d="M5 5h16M5 10h16M5 15h16M5 20h16" stroke-dasharray="2 4"/></svg></button><button class="drop" aria-label="Snap options"><i class="caret big"></i></button>
    </div>
    <div class="set">
      <button aria-label="Dynamic input"><svg width="24" height="24"><path d="M6 3v10M2 8h9" stroke="#dcdde0"/><path d="M8 15h14v7H8z" fill="#ddd"/><path d="M10 16v5" stroke="#444"/></svg></button>
      <button class="on" aria-label="Ortho"><svg width="24" height="24" fill="none" stroke="#fff"><path d="M4 2v20h19M4 15h7v7"/></svg></button>
      <button aria-label="Polar"><svg width="24" height="24" fill="none" stroke="#dcdde0"><circle cx="10" cy="12" r="8"/><path d="M10 12h12M10 12l8-9M17 5v12"/></svg></button><button class="drop" aria-label="Polar options"><i class="caret big"></i></button>
      <button aria-label="Isoplane"><svg width="24" height="24" fill="none"><path d="M4 5l14 14" stroke="#e05c5c"/><path d="M12 2v20" stroke="#62c884"/><path d="M10 10h4v4h-4z" stroke="#ddd"/></svg></button><button class="drop" aria-label="Isoplane options"><i class="caret big"></i></button>
    </div>
    <div class="set">
      <button aria-label="Tracking"><svg width="24" height="24" fill="none" stroke="#dcdde0"><path d="M20 4L4 20h18M11 13c3 1 4 3 4 7"/></svg></button>
      <button class="on" aria-label="Object snap"><svg width="24" height="24" fill="none" stroke="#fff"><path d="M5 7v14h17V6H8" stroke-width="1.500"/><path d="M2 2h5v5H2z"/></svg></button><button class="drop" aria-label="Snap modes"><i class="caret big"></i></button>
    </div>
    <div class="set">
      <button class="on" aria-label="Annotation visibility"><svg width="24" height="24" fill="#fff"><use href="#annot" x="2" y="1" width="17" height="22"/><circle cx="20" cy="6" r="3" fill="none" stroke="#fff"/></svg></button>
      <button aria-label="Auto scale"><svg width="24" height="24" fill="#dcdde0"><use href="#annot" x="2" y="1" width="17" height="22"/><path d="M20 0l-4 6h3l-2 5 6-7h-3z" stroke="#3b4453"/></svg></button>
      <button aria-label="Annotation scale"><svg width="24" height="24" fill="#dcdde0"><use href="#annot" x="3" y="1" width="17" height="22"/></svg></button>
      <button class="ratio">1:1<i class="caret big"></i></button>
    </div>
    <div class="set"><button aria-label="Workspace switching"><svg width="24" height="24" fill="#e3e4e7"><use href="#gear" x="2" y="2" width="20" height="20"/></svg></button><button class="drop" aria-label="Workspaces"><i class="caret big"></i></button></div>
    <div class="set"><button aria-label="Annotation monitor"><svg width="24" height="24"><path d="M12 2v20M2 12h20" stroke="#e8e9ec" stroke-width="2.500"/></svg></button></div>
    <div class="set"><button aria-label="Isolate"><svg width="24" height="24" fill="none" stroke="#dcdde0"><path d="M3 3h7v7H3zM11 14l4 8H6z"/><circle cx="17" cy="11" r="4"/></svg></button></div>
    <div class="set"><button class="wide" aria-label="Graphics performance"><svg width="26" height="26"><circle cx="13" cy="10" r="9" fill="#2572b8"/><path d="M2 14h10v10H2z" fill="#f5b52e"/><path d="M6 1v10M1 6h11M12 3l6 1 2 6" fill="none" stroke="#fff"/><path d="M12 18l5 6 8-11" fill="none" stroke="#59bf5d" stroke-width="3"/></svg></button></div>
    <div class="set"><button aria-label="Customization"><svg width="24" height="24"><path d="M2 4h20M2 12h20M2 20h20" stroke="#e8e9ec" stroke-width="2"/></svg></button></div>
  </div>
</footer>
</body>
</html>
```
FILE: styles.css
```css
* { box-sizing: border-box; }
body {
  margin: 0;
  min-height: 100vh;
  display: flex;
  flex-direction: column;
  overflow: hidden;
  background: #222933;
  color: #e2e4e8;
  font: 14px/20px "Noto Sans", sans-serif;
}
button, select, input { font: inherit; color: inherit; }
button { background: none; border: 0; padding: 0; display: flex; align-items: center; justify-content: center; white-space: nowrap; }
svg { flex: none; display: block; }
h2, p { margin: 0; font: inherit; }
.sprite { position: absolute; width: 0; height: 0; }

.caret { flex: none; width: 0; height: 0; border: 3px solid transparent; border-top: 4px solid #dfe1e5; border-bottom: 0; }
.caret.big { border-width: 6px 5px 0; }

.field { display: flex; align-items: center; position: relative; background: #4c586b; border: 1px solid #262d38; }
.field select { flex: 1; min-width: 0; appearance: none; border: 0; background: none; padding: 0; height: 24px; }
.field .caret { margin-right: 2px; }

/* title bar */
.titlebar { height: 29px; display: flex; align-items: center; position: relative; background: #465063; padding: 0 5px 3px 55px; }
.app-button { position: absolute; left: 0; top: 0; z-index: 2; width: 49px; height: 49px; background: linear-gradient(#a8a8a8, #cfcfcf 55%, #777); border-right: 1px solid #111; border-bottom: 2px solid #111; }
.quick { display: flex; }
.quick button { width: 30px; height: 24px; }
.quick .narrow { width: 15px; }
.workspace { width: 225px; height: 26px; margin-left: 2px; padding-left: 3px; gap: 2px; background: #3b4453; border-top: 0; }
.customize { margin-left: 4px; padding-top: 3px; border-top: 2px solid #dfe1e5; }
.caption { flex: 1; display: flex; justify-content: center; gap: 20px; color: #98a0ae; margin-top: 3px; }
.infocenter { display: flex; align-items: center; }
.infocenter button { gap: 4px; }
.expand { width: 14px; margin-right: 2px; }
.search { width: 225px; height: 26px; background: #3f4859; border: 1px solid #262d38; border-top: 0; padding: 0 3px; font-style: italic; margin-right: 2px; color: #b4bac5; }
.search::placeholder, .prompt input::placeholder { color: inherit; opacity: 1; }
.user { margin-left: 6px; }
.cart { margin-left: 12px; }
.stay { margin-left: 6px; padding-right: 12px; border-right: 1px solid #3b4453; }
.stay .caret { margin-left: 1px; }
.help { margin-left: 11px; }
.help .caret { margin-left: 5px; }
.window-buttons { display: flex; gap: 14px; margin-left: 86px; }

/* ribbon tabs */
.ribbon-tabs { height: 25px; display: flex; align-items: flex-end; padding-left: 55px; color: #b7bbc2; }
.ribbon-tabs button { height: 22px; padding: 0 12px; }
.ribbon-tabs .active { background: #3b4453; color: #f0f1f3; }
.ribbon-tabs .minimize { margin-left: 22px; gap: 7px; padding-bottom: 2px; }

/* ribbon */
.ribbon { display: flex; height: 122px; overflow: hidden; }
.panel { flex: none; display: flex; flex-direction: column; background: #3b4453; border-right: 1px solid #262d38; }
.body { height: 101px; padding-top: 4px; display: flex; }
.panel h2 { height: 21px; display: flex; align-items: center; justify-content: center; gap: 8px; }
.panel .has-launcher { position: relative; padding-right: 16px; }
.launcher { position: absolute; right: 6px; top: 6px; }
.draw { width: 278px; }
.modify { width: 272px; }
.annotation { width: 184px; }
.layers { width: 341px; }
.block-panel { width: 100px; }
.properties { width: 278px; }
.groups { width: 84px; }
.utilities { width: 121px; }
.clipboard { width: 99px; }
.view { width: 79px; }
.touch { width: 53px; }

.tool { flex-direction: column; justify-content: flex-start; flex: none; text-align: center; }
.tool svg { margin: 1px 0 3px; }
.tool .caret { margin-top: 4px; }
.line { width: 52px; }
.poly { width: 54px; }
.circle { width: 70px; }
.arc { width: 44px; }
.text { width: 58px; }
.dim { width: 74px; }
.layerprops, .match { width: 77px; }
.insert { width: 52px; }
.group { width: 48px; }
.measure { width: 88px; }
.paste { width: 66px; }
.base { width: 78px; }
.mode { width: 52px; }

.stack { display: grid; grid-template-rows: repeat(3, 30px); margin-left: 6px; }
.stack button { justify-content: flex-start; gap: 8px; }
.utilities .stack, .clipboard .stack { margin-left: 1px; }
.block-panel .stack { margin-left: 0; }
.modify .body { display: grid; grid-template: repeat(3, 31px) / 91px 89px 50px 24px; padding-left: 5px; }
.modify .body button { justify-content: flex-start; gap: 5px; }
.modify .body .caret { margin-left: 2px; }

.layer-side { display: grid; grid-template-rows: repeat(3, 30px); align-items: center; }
.layer-select { width: 260px; height: 28px; gap: 6px; }
.icon-row { display: flex; gap: 6px; margin-left: 2px; }
.prop-list { display: grid; grid-template: repeat(3, 30px) / 24px 171px; column-gap: 1px; align-items: center; padding-top: 1px; }
.prop-list .field { height: 28px; }
.color { padding-left: 13px; }
.color select { padding-left: 10px; }
.ltype hr { width: 80px; height: 1px; border: 0; background: #fff; margin: 0 2px 0 4px; }

/* drawing tabs */
.file-tabs { height: 33px; display: flex; align-items: flex-end; padding: 0 0 0 20px; color: #b7bbc2; }
.file-tab { width: 160px; height: 28px; padding: 2px 0 0 19px; justify-content: flex-start; background: #2f3744; clip-path: polygon(0 100%, 4px 50%, 9px 6px, 17px 0, calc(100% - 17px) 0, calc(100% - 9px) 6px, calc(100% - 4px) 50%, 100% 100%); }
.file-tab.active { width: 154px; padding: 2px 16px 0 13px; justify-content: space-between; background: #3b4453; color: #f0f1f3; }
.new-tab { width: 26px; height: 19px; margin: 0 0 4px 10px; background: #2f3744; border-radius: 4px 10px 4px 8px; }

/* drawing area */
.workarea { flex: 1; display: flex; border-top: 5px solid #3b4453; padding-right: 2px; }
.viewport { flex: 1; position: relative; overflow: hidden; background: #212830; border-right: 8px solid #d8e4f0; }
.scene { position: absolute; width: 100%; height: 100%; }
.minor { stroke: #252c35; fill: none; }
.major { stroke: #39414b; fill: none; }
.view-label { position: absolute; left: 3px; top: 6px; }
.view-buttons { position: absolute; right: 10px; top: 9px; display: flex; gap: 11px; }
.navigator { position: absolute; right: 15px; top: 79px; display: flex; flex-direction: column; align-items: center; gap: 28px; }
.compass, .faces { font-family: "Noto Sans", sans-serif; font-weight: 700; }
.compass { fill: #cfd2d5; }
.faces { fill: #454749; }
.ucs { width: 83px; height: 21px; gap: 7px; border-radius: 5px; border: 1px solid #b4b8c4; background: #9399a8; color: #454b5b; font-size: 12px; margin-right: 6px; }
.navbar { position: absolute; right: 4px; top: 258px; background: #565b60; border-radius: 3px; outline: 1px solid #646a70; outline-offset: -1px; }

.command { position: absolute; left: 50px; right: 39px; bottom: 1px; display: flex; }
.command-tools { width: 31px; display: flex; flex-direction: column; align-items: center; padding: 5px 4px 3px 0; background: #2a303d; }
.command-tools button { margin-top: 6px; }
.command-tools button + button { margin-top: auto; }
.command-box { flex: 1; font: 15px/19px "Liberation Mono", monospace; color: #111; border-radius: 2px; overflow: hidden; }
.history { background: rgba(162, 163, 163, .91); padding: 5px 3px 0; margin-bottom: 1px; }
.prompt { height: 25px; display: flex; align-items: center; gap: 8px; padding: 1px 6px 0 5px; background: rgba(205, 206, 208, .91); }
.prompt input { flex: 1; background: none; border: 0; padding: 0; font-style: italic; color: #55575a; }

/* bottom */
.bottom { height: 58px; flex: none; border-top: 1px solid #3b4453; display: flex; flex-direction: column; justify-content: space-between; }
.layouts { display: flex; height: 23px; padding-left: 15px; gap: 3px; color: #b7bbc2; }
.layouts button { padding: 0 13px 1px; background: #2f3744; border-radius: 2px 2px 9px 9px; }
.layouts .active { background: #3b4453; color: #fff; font-weight: 700; }
.layouts .add { width: 27px; height: 21px; padding: 0; margin-left: 3px; border-radius: 10px 3px 10px 3px; }
.status { height: 31px; display: flex; justify-content: flex-end; gap: 3px; padding-bottom: 1px; }
.set { display: flex; background: #3b4453; }
.set button { width: 30px; }
.set .drop { width: 19px; }
.set .drop .caret { margin-right: 2px; }
.set .on { background: #5c8cc0; }
.set .ratio { width: 40px; gap: 4px; }
.set .wide { width: 33px; }
.model { width: 59px; background: #3b4453; }
```
